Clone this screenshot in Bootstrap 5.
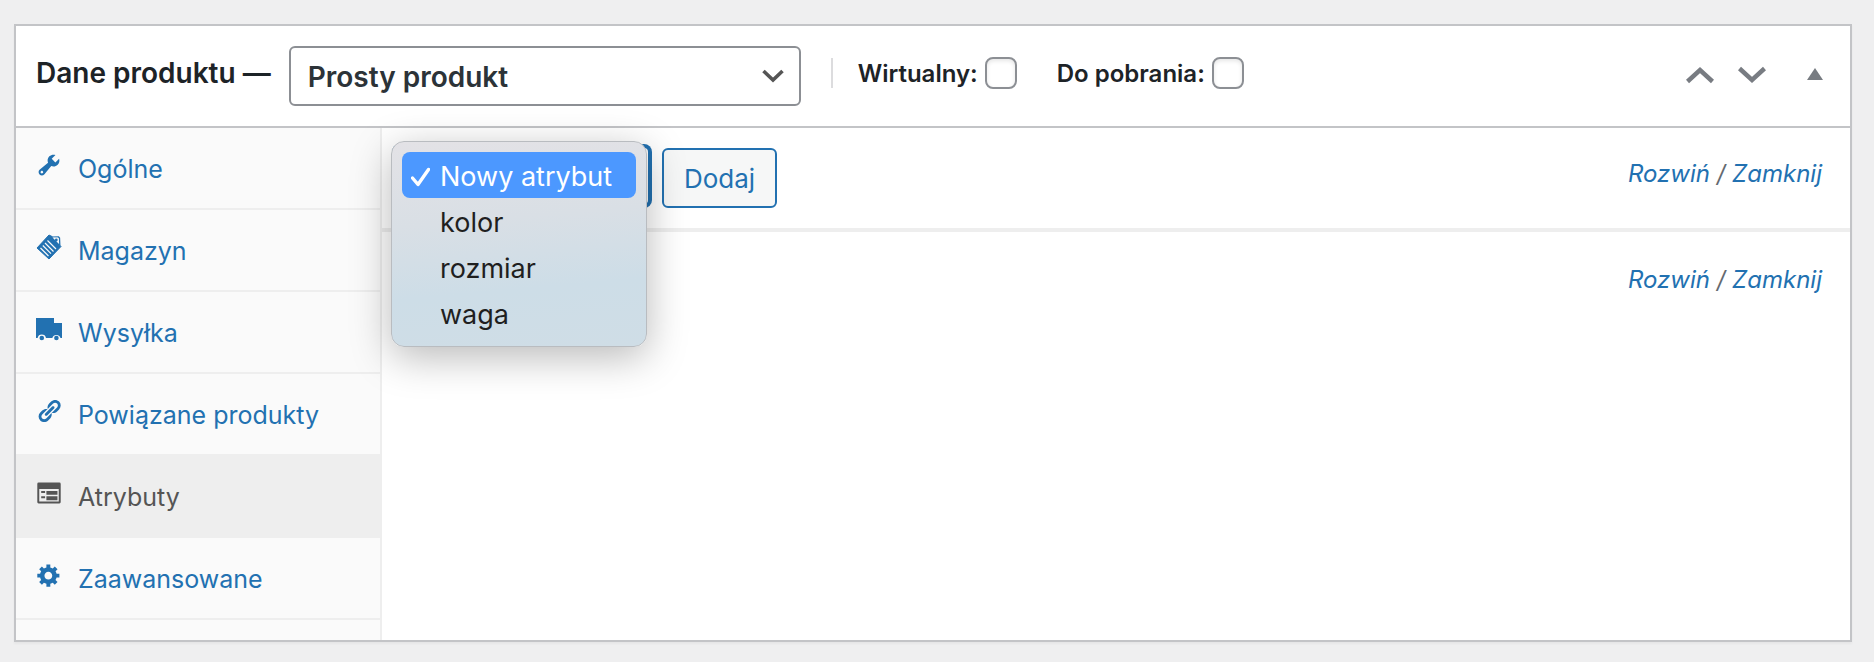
<!DOCTYPE html>
<html lang="pl">
<head>
<meta charset="utf-8">
<meta name="viewport" content="width=device-width, initial-scale=1">
<title>Dane produktu</title>
<link href="https://cdn.jsdelivr.net/npm/bootstrap@5.3.0/dist/css/bootstrap.min.css" rel="stylesheet">
<style>
  :root { --wp-blue: #2271b1; --wp-line: #c3c4c7; --wp-soft: #eeeeee; }
  body { background: #efeff0; color: #1d2327; font-family: Inter, "Liberation Sans", sans-serif; font-size: 25px; line-height: 36px; }
  a { color: var(--wp-blue); text-decoration: none; }
  .page-wrap { padding: 24px 22px 20px 14px; }
  .product-box { background: #fff; border: 2px solid var(--wp-line); box-shadow: 0 2px 2px rgba(0,0,0,.04); }
  .box-header { height: 102px; border-bottom: 2px solid var(--wp-line); padding: 0 27px 8px 20px; }
  .box-title { font-size: 28px; line-height: 36px; font-weight: 600; margin: 2px 18px 0 0; }
  .form-select { background-color: #fff; border: 2px solid #8c8f94; border-radius: 6px; color: #2c3338; height: 60px;
    background-image: url("data:image/svg+xml,%3Csvg xmlns='http://www.w3.org/2000/svg' viewBox='0 0 22 14'%3E%3Cpath d='M1.500 2 L11 11 L20.500 2' fill='none' stroke='%23555' stroke-width='3.600'/%3E%3C/svg%3E");
    background-size: 22px 14px; background-position: right 15px center; }
  .type-select { width: 512px; font-size: 28px; font-weight: 600; padding: 2px 44px 0 17px; margin-top: 8px; }
  .type-options { border-left: 2px solid #dcdcde; height: 30px; margin: 2px 0 0 30px; padding-left: 25px; gap: 40px; }
  .type-options label { font-size: 24px; font-weight: 600; white-space: nowrap; padding-top: 2px; }
  .type-options .check-pair { gap: 7px; }
  .type-options .form-check-input { width: 32px; height: 32px; margin: 0; border: 2px solid #8c8f94; border-radius: 8px; background-color: #fff; box-shadow: inset 0 2px 4px rgba(0,0,0,.1); }
  .box-handles { margin-top: 6px; }
  .handle { border: 0; background: none; padding: 0; color: #787c82; line-height: 0; }
  .handle-toggle { margin-left: 41px; }
  .side-tabs { width: 366px; flex: none; background: #fafafa; border-right: 2px solid var(--wp-soft); padding-bottom: 20px; }
  .side-tabs .nav-link { height: 82px; border-bottom: 2px solid var(--wp-soft); border-radius: 0; color: var(--wp-blue); padding: 2px 20px 0; gap: 16px; }
  .side-tabs .nav-link.active { background: var(--wp-soft); color: #555; margin-right: -2px; }
  .side-tabs svg { width: 26px; height: 26px; flex: none; fill: currentColor; margin-bottom: 8px; }
  .attr-toolbar { height: 104px; border-bottom: 4px solid var(--wp-soft); padding: 0 28px 0 12px; }
  .attr-picker { width: 256px; }
  .attr-select { font-size: 25px; padding: 0 44px 0 16px; border-color: var(--wp-blue); box-shadow: 0 0 0 2px var(--wp-blue); }
  .attr-menu { position: absolute; left: -3px; top: -5px; width: 256px; padding: 10px; margin: 0; list-style: none; color: #1f1f1f; font-size: 27px;
    background: linear-gradient(175deg, #e3e2e6 0%, #d9dfe5 38%, #cddde7 70%, #cfdde6 100%); border: 1px solid #b9bcc0; border-radius: 13px; box-shadow: 0 10px 40px rgba(0,0,0,.28); z-index: 5; }
  .attr-menu li { display: flex; align-items: center; height: 46px; padding: 3px 0 0 38px; white-space: nowrap; border-radius: 8px; }
  .attr-menu .chosen { background: #4c98ff; color: #fff; padding-left: 9px; gap: 10px; }
  .add-btn { height: 60px; border: 2px solid var(--wp-blue); border-radius: 6px; background: #f6f7f7; color: var(--wp-blue); font-size: 26px; padding: 2px 20px 0; margin-left: 12px; }
  .toggle-links { font-size: 24px; font-style: italic; color: #646970; white-space: nowrap; }
  .attr-footer { padding: 30px 28px 30px 12px; }
</style>
</head>
<body>
<main class="page-wrap">
  <section class="product-box">
    <header class="box-header d-flex align-items-center">
      <h2 class="box-title text-nowrap"><label for="product-type">Dane produktu —</label></h2>
      <select class="form-select type-select" id="product-type"><option>Prosty produkt</option><option>Produkt z wariantami</option></select>
      <div class="type-options d-flex align-items-center">
        <div class="check-pair d-flex align-items-center"><label for="virtual">Wirtualny:</label><input class="form-check-input" type="checkbox" id="virtual"></div>
        <div class="check-pair d-flex align-items-center"><label for="download">Do pobrania:</label><input class="form-check-input" type="checkbox" id="download"></div>
      </div>
      <div class="box-handles d-flex align-items-center ms-auto">
        <button class="handle" type="button" aria-label="W górę"><svg width="28" height="18" viewBox="0 0 28 18"><path d="M1.500 15.500 L14 4 L26.500 15.500" fill="none" stroke="currentColor" stroke-width="4.500"/></svg></button>
        <button class="handle ms-4" type="button" aria-label="W dół"><svg width="28" height="18" viewBox="0 0 28 18"><path d="M1.500 2.500 L14 14 L26.500 2.500" fill="none" stroke="currentColor" stroke-width="4.500"/></svg></button>
        <button class="handle handle-toggle" type="button" aria-label="Zwiń panel"><svg width="16" height="18" viewBox="0 0 16 18"><path d="M0 14 L8 2 L16 14Z" fill="currentColor"/></svg></button>
      </div>
    </header>
    <div class="d-flex">
      <nav class="side-tabs nav flex-column flex-nowrap">
        <a class="nav-link d-flex align-items-center" href="#"><svg viewBox="0 0 20 20"><path d="M16.680 9.770c-1.340 1.340-3.300 1.670-4.950.990l-5.410 6.520c-.990.990-2.590.990-3.580 0s-.990-2.590 0-3.570l6.520-5.420c-.680-1.650-.350-3.610.990-4.950 1.280-1.280 3.120-1.620 4.720-1.060l-2.890 2.890 2.820 2.820 2.860-2.870c.530 1.580.180 3.390-1.080 4.650zM3.810 16.210c.400.390 1.040.390 1.430 0 .400-.400.400-1.040 0-1.430-.390-.400-1.030-.400-1.430 0-.390.390-.390 1.030 0 1.430z"/></svg>Ogólne</a>
        <a class="nav-link d-flex align-items-center" href="#"><svg viewBox="0 0 26 26"><path d="M1 14 L13 1 L16 2.500 L25 12.500 L13 25 Z" stroke="currentColor" stroke-linejoin="round"/><path d="M16 3.200 L22.500 2.800 L23.500 4 L23.800 11" fill="none" stroke="currentColor" stroke-width="1.300"/><path d="M16.500 3.500 L22 3.500 L23 10 Z" fill="#fafafa"/><circle cx="20.300" cy="6" r="1.400"/><path d="M11.500 6.500l8.500 8.500M9 9l8.500 8.500M6.800 11.500l8.200 8.200M4.500 14l8 8" fill="none" stroke="#fafafa" stroke-width="1.200"/></svg>Magazyn</a>
        <a class="nav-link d-flex align-items-center" href="#"><svg viewBox="0 0 26 26"><path d="M0 2H18V7H26V22H24.500A4.300 4.300 0 0 0 16.300 22H10A4.300 4.300 0 0 0 1.600 22H0Z"/><circle cx="5.800" cy="22" r="2.300"/><circle cx="20.400" cy="22" r="2.300"/></svg>Wysyłka</a>
        <a class="nav-link d-flex align-items-center" href="#"><svg viewBox="0 0 20 20"><path d="M17.740 2.760c1.680 1.690 1.680 4.410 0 6.100l-1.530 1.520c-1.120 1.120-2.700 1.470-4.140 1.090l2.620-2.610.760-.770.760-.760c.840-.840.840-2.200 0-3.040-.840-.850-2.200-.850-3.040 0l-.770.760-3.380 3.380c-.370-1.440-.020-3.020 1.100-4.140l1.520-1.530c1.690-1.680 4.420-1.680 6.100 0zM8.590 13.430l5.340-5.340c.420-.420.420-1.100 0-1.520-.440-.430-1.130-.390-1.530 0l-5.330 5.340c-.420.420-.420 1.100 0 1.520.440.430 1.130.390 1.520 0zM7.830 15.720l4.140-4.150c.380 1.440.030 3.020-1.090 4.140l-1.520 1.530c-1.690 1.680-4.410 1.680-6.100 0-1.680-1.680-1.680-4.420 0-6.100l1.530-1.520c1.120-1.120 2.700-1.470 4.140-1.100l-4.140 4.150c-.850.840-.850 2.200 0 3.050.840.840 2.200.840 3.040 0z"/></svg>Powiązane produkty</a>
        <a class="nav-link active d-flex align-items-center" href="#" aria-current="page"><svg viewBox="0 0 20 20"><path fill-rule="evenodd" d="M2 2H18Q19 2 19 3V17Q19 18 18 18H2Q1 18 1 17V3Q1 2 2 2ZM2.500 7V16.500H17.500V7Z"/><path d="M4 8.500h3V10H4zM8 8.500h8.500v2.800H8zM4 12.500h3V14H4zM8 12.500h8.500v3H8z"/></svg>Atrybuty</a>
        <a class="nav-link d-flex align-items-center" href="#"><svg viewBox="0 0 20 20"><path d="M18 12h-2.180c-.170.700-.440 1.350-.810 1.930l1.540 1.540-2.100 2.100-1.540-1.540c-.580.360-1.230.630-1.910.790V19H8v-2.180c-.680-.160-1.330-.430-1.910-.790l-1.540 1.540-2.120-2.120 1.540-1.540c-.360-.580-.630-1.230-.790-1.910H1V9.030h2.170c.160-.700.440-1.350.800-1.940L2.430 5.550l2.100-2.100 1.540 1.540c.580-.370 1.240-.640 1.930-.810V2h3v2.180c.680.160 1.330.430 1.910.790l1.540-1.540 2.120 2.120-1.540 1.540c.360.590.640 1.240.800 1.940H18V12zm-8.500 1.500c1.660 0 3-1.340 3-3s-1.340-3-3-3-3 1.340-3 3 1.340 3 3 3z"/></svg>Zaawansowane</a>
      </nav>
      <div class="flex-grow-1">
        <div class="attr-toolbar d-flex align-items-center">
          <div class="attr-picker position-relative mb-1">
            <select class="form-select attr-select" aria-label="Atrybut"><option>Nowy atrybut</option><option>kolor</option><option>rozmiar</option><option>waga</option></select>
            <ul class="attr-menu" role="listbox" aria-label="Atrybut">
              <li class="chosen" role="option" aria-selected="true"><svg width="19" height="20" viewBox="0 0 19 20"><path d="M1.500 11 L7 17.500 L17.500 2.500" fill="none" stroke="#fff" stroke-width="3.400" stroke-linecap="round" stroke-linejoin="round"/></svg>Nowy atrybut</li>
              <li role="option">kolor</li>
              <li role="option">rozmiar</li>
              <li role="option">waga</li>
            </ul>
          </div>
          <button class="add-btn" type="button">Dodaj</button>
          <span class="toggle-links ms-auto mb-2"><a href="#">Rozwiń</a> / <a href="#">Zamknij</a></span>
        </div>
        <div class="attr-footer d-flex"><span class="toggle-links ms-auto"><a href="#">Rozwiń</a> / <a href="#">Zamknij</a></span></div>
      </div>
    </div>
  </section>
</main>
<script src="https://cdn.jsdelivr.net/npm/bootstrap@5.3.0/dist/js/bootstrap.bundle.min.js"></script>
</body>
</html>
